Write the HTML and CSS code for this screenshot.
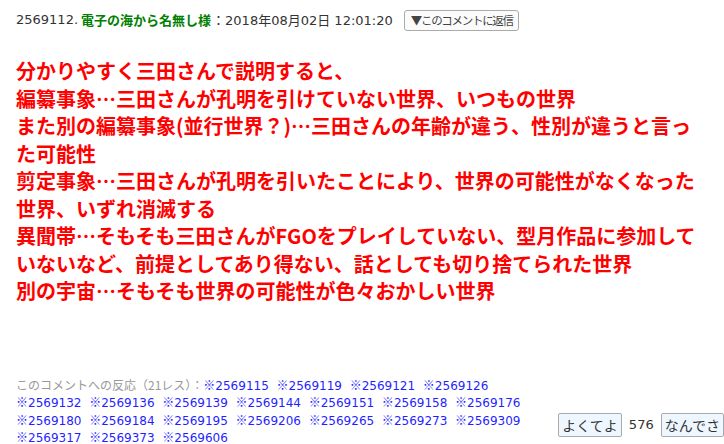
FILE: index.html
```html
<!DOCTYPE html>
<html lang="ja">
<head>
    <meta charset="UTF-8">
    <meta name="viewport" content="width=device-width, initial-scale=1.0">
    <title>コメント</title>
    <link rel="stylesheet" href="styles.css">
</head>
<body>
    <div class="comment">
        <div class="comment-head">
            <span class="num">2569112.</span>
            <span class="name">電子の海から名無し様</span>
            <span class="date"><span class="cjk">：</span>2018年08月02日 12:01:20</span>
            <button class="reply">▼このコメントに返信</button>
        </div>

        <div class="comment-body">
            分かりやすく三田さんで説明すると、<br>
            編纂事象…三田さんが孔明を引けていない世界、いつもの世界<br>
            また別の編纂事象(並行世界？)…三田さんの年齢が違う、性別が違うと言った可能性<br>
            剪定事象…三田さんが孔明を引いたことにより、世界の可能性がなくなった世界、いずれ消滅する<br>
            異聞帯…そもそも三田さんがFGOをプレイしていない、型月作品に参加していないなど、前提としてあり得ない、話としても切り捨てられた世界<br>
            別の宇宙…そもそも世界の可能性が色々おかしい世界
        </div>

        <div class="comment-foot">
            <div class="reactions">
                <span class="label">このコメントへの反応（21レス）：</span><a href="#"><i>※</i>2569115</a> <a href="#"><i>※</i>2569119</a> <a href="#"><i>※</i>2569121</a> <a href="#"><i>※</i>2569126</a><br>
                <a href="#"><i>※</i>2569132</a> <a href="#"><i>※</i>2569136</a> <a href="#"><i>※</i>2569139</a> <a href="#"><i>※</i>2569144</a> <a href="#"><i>※</i>2569151</a> <a href="#"><i>※</i>2569158</a> <a href="#"><i>※</i>2569176</a><br>
                <a href="#"><i>※</i>2569180</a> <a href="#"><i>※</i>2569184</a> <a href="#"><i>※</i>2569195</a> <a href="#"><i>※</i>2569206</a> <a href="#"><i>※</i>2569265</a> <a href="#"><i>※</i>2569273</a> <a href="#"><i>※</i>2569309</a><br>
                <a href="#"><i>※</i>2569317</a> <a href="#"><i>※</i>2569373</a> <a href="#"><i>※</i>2569606</a>
            </div>
            <div class="votes">
                <button class="vote">よくてよ</button>
                <span class="count">576</span>
                <button class="vote">なんでさ</button>
            </div>
        </div>
    </div>
</body>
</html>
```

FILE: styles.css
```css
body {
    font-family: "Noto Sans CJK JP", "Noto Sans", sans-serif;
    margin: 0;
    padding: 0 0 0 16px;
    color: #333;
    background: #fff;
}
.comment {
    width: 708px;
    border-bottom: 1px dotted #bbb;
}
.comment-head {
    display: flex;
    align-items: center;
    height: 22px;
    margin-top: 9px;
    font-family: "DejaVu Sans", "Noto Sans CJK JP", sans-serif;
    font-size: 13px;
    line-height: 22px;
    white-space: nowrap;
}
.comment-head .name {
    font-family: "Noto Sans CJK JP", sans-serif;
    color: #008000;
    font-weight: bold;
    margin-left: 3px;
    margin-right: 1px;
}
.cjk {
    font-family: "Noto Sans CJK JP", sans-serif;
}
.reply {
    font-family: "Noto Sans CJK JP", sans-serif;
    font-size: 11.5px;
    letter-spacing: -1.3px;
    line-height: 17px;
    color: #444;
    background: #fbfbfb;
    border: 1px solid #aaa;
    border-radius: 3px;
    padding: 0 5px 0 6px;
    margin-left: 11px;
    height: 21px;
}
.comment-body {
    width: 692px;
    margin-top: 26px;
    font-size: 20px;
    line-height: 27.5px;
    font-weight: bold;
    color: #f00;
}
.comment-foot {
    display: flex;
    justify-content: space-between;
    align-items: flex-end;
    margin-top: 72px;
}
.reactions {
    width: 530px;
    font-size: 12px;
    line-height: 16.5px;
}
.reactions .label {
    color: #999;
}
.reactions a {
    font-family: "DejaVu Sans", "Noto Sans CJK JP", sans-serif;
    color: #1f1fff;
    text-decoration: none;
    margin-right: 5px;
}
.reactions a i {
    font-family: "Noto Sans CJK JP", sans-serif;
    font-style: normal;
}
.votes {
    display: flex;
    align-items: center;
    gap: 5px;
    margin-bottom: 10px;
}
.vote {
    font-family: inherit;
    font-size: 14px;
    line-height: 20px;
    color: #333;
    background: #eef7ff;
    border: 1px solid #aaa;
    border-radius: 2px;
    padding: 1px 3px;
}
.count {
    font-family: "DejaVu Sans", sans-serif;
    font-size: 13px;
    margin: 0 2px;
}
```
